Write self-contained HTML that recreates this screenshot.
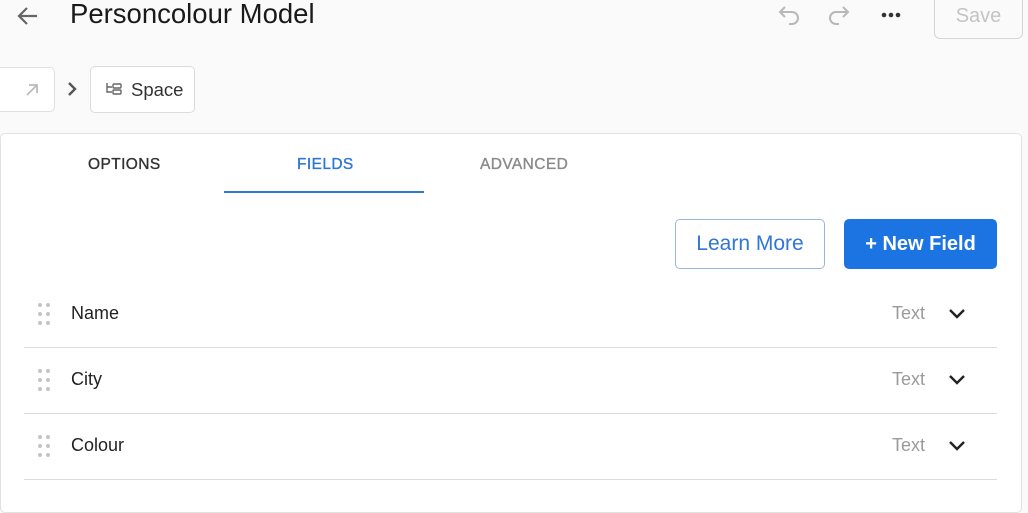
<!DOCTYPE html>
<html><head><meta charset="utf-8"><style>
*{box-sizing:border-box;margin:0;padding:0}
body{width:1028px;height:498px;overflow:hidden;background:#fafafa;font-family:"Liberation Sans",sans-serif;position:relative;color:#1f1f1f}
.a{position:absolute}
.card{left:0;top:133px;width:1022px;height:380px;background:#fff;border:1px solid #e2e2e2;border-radius:5px}
.tab{top:156px;font-size:15.5px;letter-spacing:.4px;-webkit-text-stroke:.35px}
.row{left:24px;width:973px;height:66px;border-bottom:1px solid #dcdcdc}
.row .n{position:absolute;left:47px;top:21px;font-size:18px;color:#222}
.row .t{position:absolute;left:868px;top:21px;font-size:18px;color:#9a9a9a}
.row svg.c{position:absolute;left:924px;top:26px}
.row svg.g{position:absolute;left:13px;top:20px}
</style></head><body>
<svg class="a" style="left:16px;top:5px" width="24" height="22" viewBox="0 0 24 22"><path d="M21 11H4M11 3L3 11l8 8" fill="none" stroke="#666" stroke-width="2.2"/></svg>
<div class="a" style="left:70px;top:-2px;font-size:27.5px;color:#1a1a1a">Personcolour Model</div>
<svg class="a" style="left:777px;top:4px" width="26" height="22" viewBox="0 0 26 22"><path d="M8 3L3 8l5 5M3 8h12a6 6 0 0 1 0 12h-3" fill="none" stroke="#b8b8b8" stroke-width="2"/></svg>
<svg class="a" style="left:825px;top:4px" width="26" height="22" viewBox="0 0 26 22"><path d="M18 3l5 5-5 5M23 8H11a6 6 0 0 0 0 12h3" fill="none" stroke="#b8b8b8" stroke-width="2"/></svg>
<svg class="a" style="left:880px;top:11px" width="24" height="8"><circle cx="4" cy="4" r="2.3" fill="#333"/><circle cx="11" cy="4" r="2.3" fill="#333"/><circle cx="18" cy="4" r="2.3" fill="#333"/></svg>
<div class="a" style="left:934px;top:-8px;width:89px;height:47px;border:1px solid #d6d6d6;border-radius:6px;font-size:20px;color:#c4c4c4;text-align:center;line-height:46px">Save</div>
<div class="a" style="left:-6px;top:67px;width:61px;height:45px;border:1px solid #e0e0e0;border-radius:5px;background:#fff"></div>
<svg class="a" style="left:24px;top:82px" width="16" height="16"><path d="M3 13L13 3M5 3h8v8" fill="none" stroke="#bbb" stroke-width="1.8"/></svg>
<svg class="a" style="left:66px;top:81px" width="12" height="16"><path d="M3 2l6 6-6 6" fill="none" stroke="#555" stroke-width="2.4"/></svg>
<div class="a" style="left:90px;top:66px;width:105px;height:47px;border:1px solid #dcdcdc;border-radius:5px;background:#fff"></div>
<svg class="a" style="left:105px;top:82px" width="18" height="16"><path d="M2 1v9h5M2 5h5" fill="none" stroke="#666" stroke-width="1.4"/><rect x="8" y="2" width="8" height="4" rx="1" fill="none" stroke="#666" stroke-width="1.4"/><rect x="8" y="8" width="8" height="4" rx="1" fill="none" stroke="#666" stroke-width="1.4"/></svg>
<div class="a" style="left:131px;top:79px;font-size:18.5px;color:#333">Space</div>
<div class="a card"></div>
<div class="a tab" style="left:88px;color:#333">OPTIONS</div>
<div class="a tab" style="left:297px;color:#2f76d6">FIELDS</div>
<div class="a tab" style="left:480px;color:#8a8a8a">ADVANCED</div>
<div class="a" style="left:224px;top:191px;width:200px;height:2px;background:#2f76d6"></div>
<div class="a" style="left:675px;top:219px;width:150px;height:50px;border:1px solid #9ab6de;border-radius:5px;color:#2f76d6;font-size:21px;text-align:center;line-height:48px">Learn More</div>
<div class="a" style="left:844px;top:219px;width:153px;height:50px;background:#1c74e2;border-radius:5px;color:#fff;font-size:20px;font-weight:bold;text-align:center;line-height:50px">+ New Field</div>
<div class="a row" style="top:282px"><svg class="g" width="14" height="24"><g fill="#c4c4c4"><circle cx="3" cy="3" r="2"/><circle cx="11" cy="3" r="2"/><circle cx="3" cy="12" r="2"/><circle cx="11" cy="12" r="2"/><circle cx="3" cy="21" r="2"/><circle cx="11" cy="21" r="2"/></g></svg><div class="n">Name</div><div class="t">Text</div><svg class="c" width="18" height="12"><path d="M2 2l7 7 7-7" fill="none" stroke="#222" stroke-width="2.4"/></svg></div>
<div class="a row" style="top:348px"><svg class="g" width="14" height="24"><g fill="#c4c4c4"><circle cx="3" cy="3" r="2"/><circle cx="11" cy="3" r="2"/><circle cx="3" cy="12" r="2"/><circle cx="11" cy="12" r="2"/><circle cx="3" cy="21" r="2"/><circle cx="11" cy="21" r="2"/></g></svg><div class="n">City</div><div class="t">Text</div><svg class="c" width="18" height="12"><path d="M2 2l7 7 7-7" fill="none" stroke="#222" stroke-width="2.4"/></svg></div>
<div class="a row" style="top:414px"><svg class="g" width="14" height="24"><g fill="#c4c4c4"><circle cx="3" cy="3" r="2"/><circle cx="11" cy="3" r="2"/><circle cx="3" cy="12" r="2"/><circle cx="11" cy="12" r="2"/><circle cx="3" cy="21" r="2"/><circle cx="11" cy="21" r="2"/></g></svg><div class="n">Colour</div><div class="t">Text</div><svg class="c" width="18" height="12"><path d="M2 2l7 7 7-7" fill="none" stroke="#222" stroke-width="2.4"/></svg></div>
</body></html>
